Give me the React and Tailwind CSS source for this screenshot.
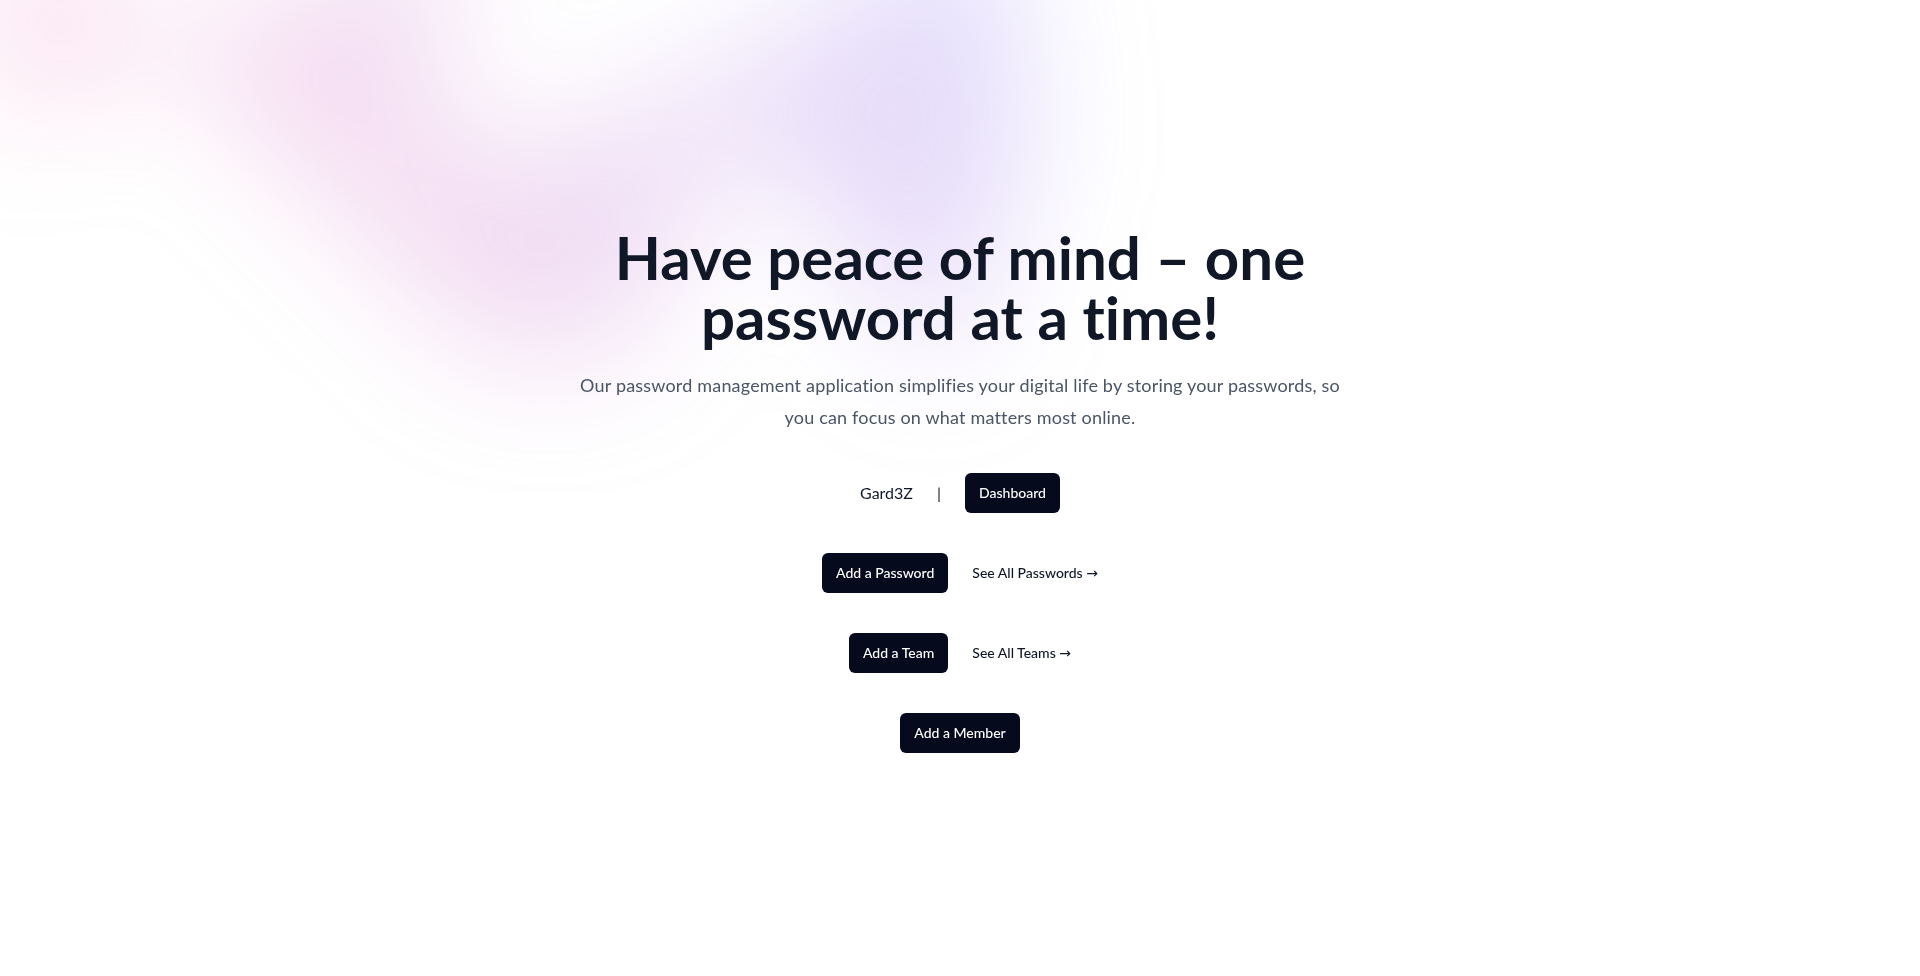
export default function App() {
  return (
    <div className="relative isolate min-h-screen overflow-hidden bg-white px-8 pt-14 font-['Lato','Noto_Sans',sans-serif] [font-variant-ligatures:none]">
      {/* Gradient blob */}
      <div aria-hidden="true" className="absolute inset-x-0 -top-80 -z-10 transform-gpu overflow-hidden blur-3xl">
        <div className="relative left-[calc(50%-30rem)] aspect-[1155/678] w-[72.1875rem] -translate-x-1/2 rotate-[30deg] bg-linear-to-tr from-[#ff80b5] to-[#9089fc] opacity-30 [clip-path:polygon(74.1%_44.1%,100%_61.6%,97.5%_26.9%,85.5%_0.1%,80.7%_2%,72.5%_32.5%,60.2%_62.4%,52.4%_68.1%,47.5%_58.3%,45.2%_34.5%,27.5%_76.7%,0.1%_64.9%,17.9%_100%,27.6%_76.8%,76.1%_97.7%,74.1%_44.1%)]" />
      </div>

      <main className="mx-auto max-w-3xl pt-[171px] pb-44 text-center">
        <h1 className="text-6xl font-bold text-gray-900">
          Have peace of mind – one password at a time!
        </h1>
        <p className="mt-[22px] text-lg leading-8 tracking-[0.01em] text-gray-600">
          Our password management application simplifies your digital life by storing your passwords, so you can focus on what matters most online.
        </p>

        <div className="mt-10 flex items-center justify-center gap-x-6">
          <span className="text-base text-gray-900">Gard3Z</span>
          <span className="text-base text-gray-900">|</span>
          <a href="#" className="rounded-md bg-[#050a1c] px-3.5 py-2.5 text-sm font-medium text-white">
            Dashboard
          </a>
        </div>

        <div className="mt-10 flex items-center justify-center gap-x-6">
          <a href="#" className="rounded-md bg-[#050a1c] px-3.5 py-2.5 text-sm font-medium text-white">
            Add a Password
          </a>
          <a href="#" className="text-sm font-medium text-gray-900">
            See All Passwords <span aria-hidden="true" className="font-['DejaVu_Sans',sans-serif] font-normal">→</span>
          </a>
        </div>

        <div className="mt-10 flex items-center justify-center gap-x-6">
          <a href="#" className="rounded-md bg-[#050a1c] px-3.5 py-2.5 text-sm font-medium text-white">
            Add a Team
          </a>
          <a href="#" className="text-sm font-medium text-gray-900">
            See All Teams <span aria-hidden="true" className="font-['DejaVu_Sans',sans-serif] font-normal">→</span>
          </a>
        </div>

        <div className="mt-10 flex items-center justify-center gap-x-6">
          <a href="#" className="rounded-md bg-[#050a1c] px-3.5 py-2.5 text-sm font-medium text-white">
            Add a Member
          </a>
        </div>
      </main>
    </div>
  )
}
